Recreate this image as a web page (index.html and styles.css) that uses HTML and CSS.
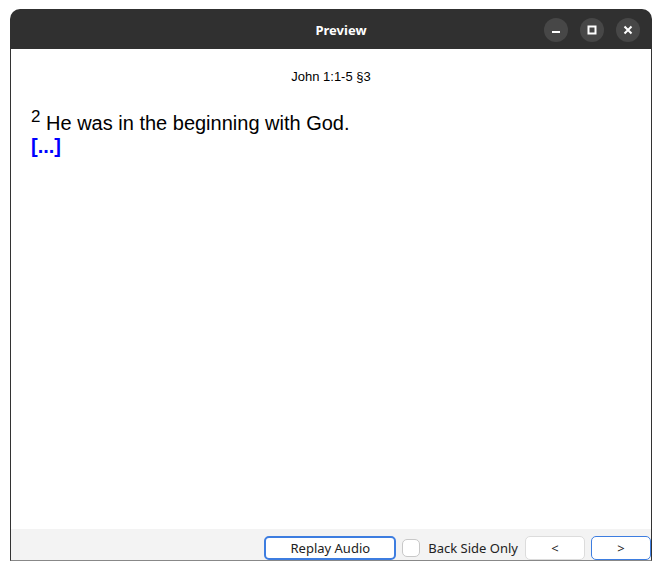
FILE: index.html
```html
<!DOCTYPE html>
<html>
<head>
<meta charset="utf-8">
<link rel="stylesheet" href="styles.css">
</head>
<body>
<div class="window">
  <div class="titlebar">
    <div class="title">Preview</div>
    <div class="controls">
      <div class="ctl"><svg width="10" height="10" viewBox="0 0 10 10"><rect x="1" y="6" width="8" height="2" fill="#fff"/></svg></div>
      <div class="ctl"><svg width="10" height="10" viewBox="0 0 10 10"><rect x="1.5" y="1.5" width="7" height="7" fill="none" stroke="#fff" stroke-width="2"/></svg></div>
      <div class="ctl"><svg width="10" height="10" viewBox="0 0 10 10"><path d="M1.5 1.5 L8.5 8.5 M8.5 1.5 L1.5 8.5" stroke="#fff" stroke-width="2"/></svg></div>
    </div>
  </div>
  <div class="content">
    <div class="ref">John 1:1-5 §3</div>
    <div class="verse"><sup class="num">2</sup> He was in the beginning with God.</div>
    <div class="cloze">[...]</div>
  </div>
  <div class="footer">
    <button class="btn replay">Replay Audio</button>
    <label class="check"><span class="box"></span><span>Back Side Only</span></label>
    <button class="btn nav">&lt;</button>
    <button class="btn nav focus">&gt;</button>
  </div>
</div>
</body>
</html>
```
FILE: styles.css
```css
html, body {
  margin: 0;
  padding: 0;
  background: #ffffff;
}
.window {
  margin: 9px 0 0 10px;
  width: 642px;
  height: 552px;
  display: flex;
  flex-direction: column;
}
.titlebar {
  height: 40px;
  background: #303030;
  border-radius: 10px 10px 0 0;
  display: flex;
  align-items: center;
  justify-content: center;
  padding-left: 20px;
  position: relative;
}
.title {
  color: #ffffff;
  font-family: "Noto Sans", sans-serif;
  font-weight: bold;
  font-size: 13px;
  margin-top: 2px;
}
.controls {
  position: absolute;
  right: 12px;
  top: 9px;
  display: flex;
  gap: 12px;
}
.ctl {
  width: 24px;
  height: 24px;
  border-radius: 50%;
  background: #474747;
  display: flex;
  align-items: center;
  justify-content: center;
}
.content {
  flex: 1;
  background: #ffffff;
  border-left: 1px solid #333;
  border-right: 1px solid #333;
  font-family: "Liberation Sans", Arial, sans-serif;
  color: #000;
  padding: 0 20px;
}
.ref {
  text-align: center;
  font-size: 13px;
  margin-top: 20px;
  line-height: 16px;
}
.verse {
  margin-top: 27px;
  font-size: 20px;
  line-height: 23px;
}
.num {
  font-size: 17px;
  vertical-align: 0.5em;
  line-height: 0;
}
.cloze {
  font-size: 20px;
  font-weight: bold;
  color: #0000ff;
  line-height: 23px;
}
.footer {
  background: #f3f3f3;
  border-left: 1px solid #333;
  border-right: 1px solid #333;
  border-bottom: 1px solid #888;
  display: flex;
  align-items: flex-end;
  justify-content: flex-end;
  gap: 6px;
  box-sizing: border-box;
  height: 32px;
}
.btn {
  font-family: "Noto Sans", sans-serif;
  font-size: 13px;
  color: #222;
  background: #ffffff;
  border: 1px solid #dcdcdc;
  border-radius: 5px;
  height: 24px;
  padding: 0;
}
.replay {
  width: 132px;
  border: 2px solid #3d7de0;
}
.nav {
  width: 60px;
}
.focus {
  border-color: #3d7de0;
}
.check {
  display: flex;
  align-items: center;
  height: 24px;
  font-family: "Noto Sans", sans-serif;
  font-size: 13px;
  color: #222;
  gap: 8px;
  margin-right: 1px;
}
.box {
  width: 16px;
  height: 16px;
  border: 1px solid #c8c8c8;
  border-radius: 5px;
  background: #fff;
}
```
